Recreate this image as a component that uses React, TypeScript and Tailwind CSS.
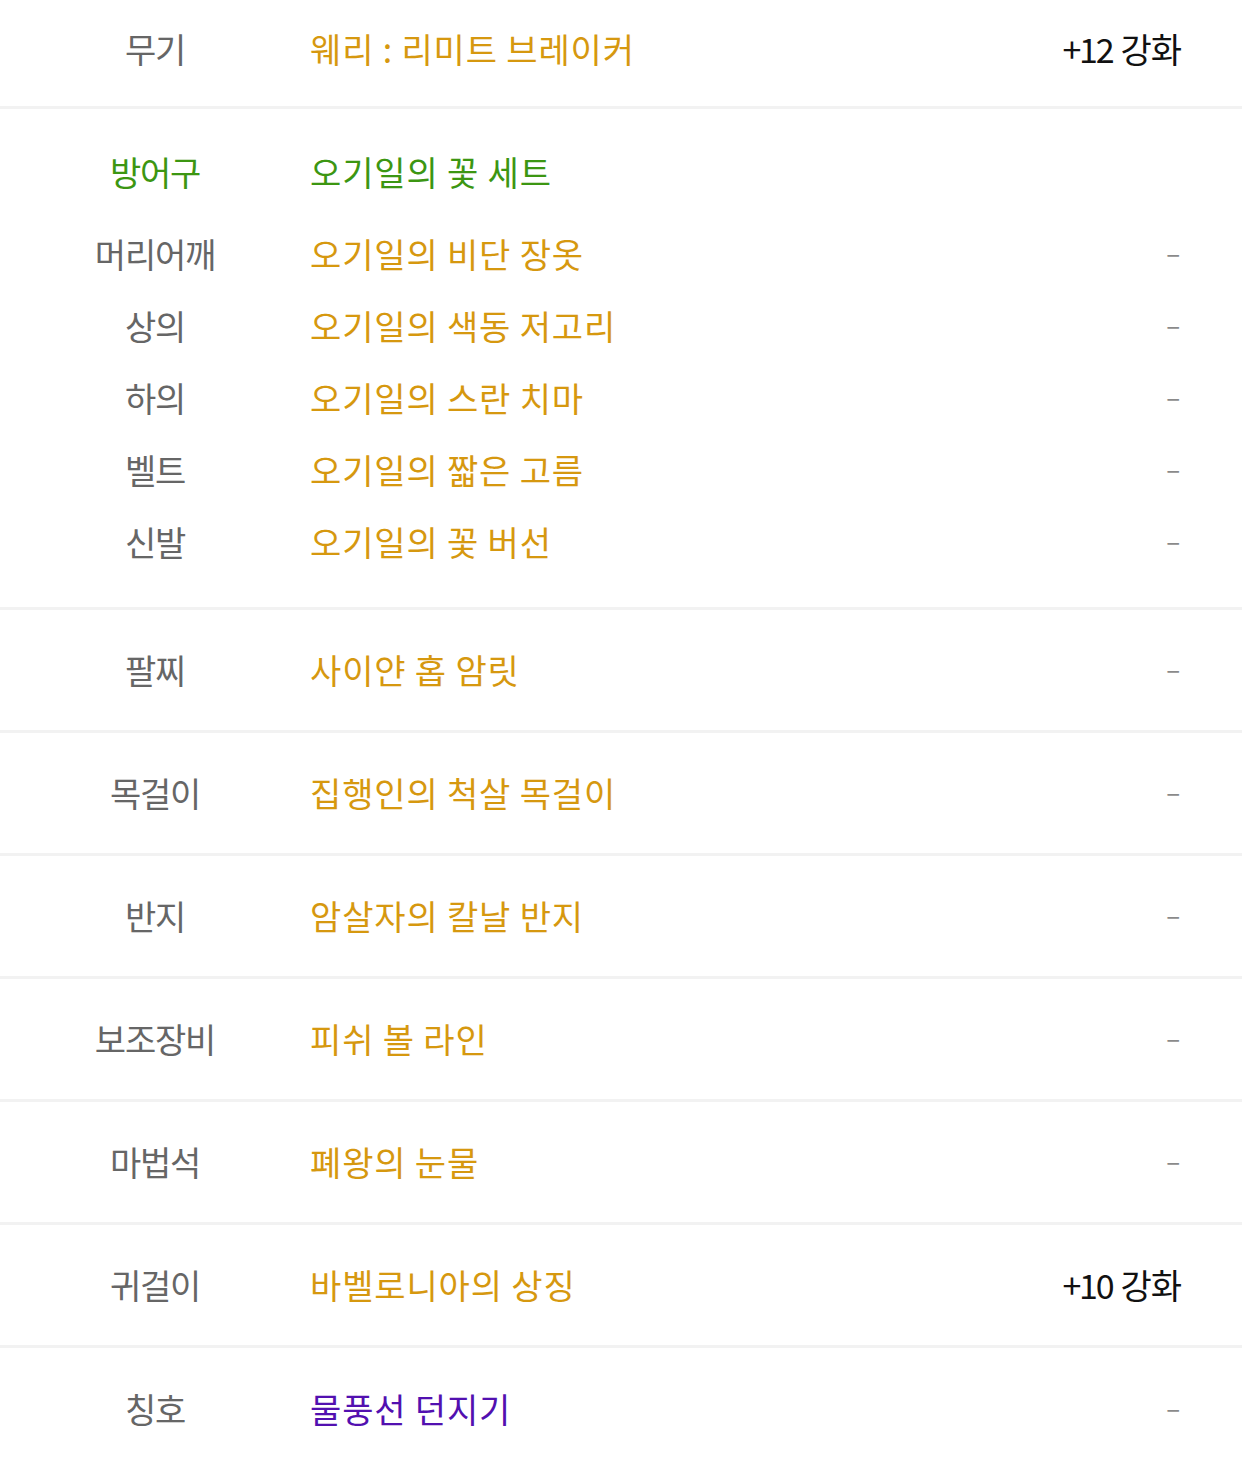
const FONT = "font-['Noto_Sans_CJK_KR','Noto_Sans',sans-serif]";

type Item = { label: string; name: string; value?: string; color?: string };

const armor: Item[] = [
  { label: "머리어깨", name: "오기일의 비단 장옷" },
  { label: "상의", name: "오기일의 색동 저고리" },
  { label: "하의", name: "오기일의 스란 치마" },
  { label: "벨트", name: "오기일의 짧은 고름" },
  { label: "신발", name: "오기일의 꽃 버선" },
];

const singles: Item[] = [
  { label: "팔찌", name: "사이얀 홉 암릿" },
  { label: "목걸이", name: "집행인의 척살 목걸이" },
  { label: "반지", name: "암살자의 칼날 반지" },
  { label: "보조장비", name: "피쉬 볼 라인" },
  { label: "마법석", name: "폐왕의 눈물" },
  { label: "귀걸이", name: "바벨로니아의 상징", value: "+10 강화" },
  { label: "칭호", name: "물풍선 던지기", color: "text-[#5210b0]" },
];

function Value({ value }: { value?: string }) {
  if (value) {
    const [num, word] = value.split(" ");
    return (
      <span className="flex items-center gap-[8px] text-[#111]">
        <span className="tracking-[-2.2px]">{num}</span>
        <span className="tracking-[-1px]">{word}</span>
      </span>
    );
  }
  return <span className="inline-block -translate-y-[5px] text-[26px] text-[#8a8a8a]">–</span>;
}

function Line({ item, className }: { item: Item; className: string }) {
  return (
    <div className={`flex items-center ${className}`}>
      <div className="w-[310px] shrink-0 text-center tracking-[-1.2px] text-[#666666]">{item.label}</div>
      <div className={`flex-1 ${item.color ?? "text-[#d6980f]"}`}>{item.name}</div>
      <div className="pr-[61px]">
        <Value value={item.value} />
      </div>
    </div>
  );
}

export default function App() {
  return (
    <div className={`w-[1242px] bg-white text-[34px] leading-none tracking-[0.85px] ${FONT}`}>
      <Line
        item={{ label: "무기", name: "웨리 : 리미트 브레이커", value: "+12 강화" }}
        className="h-[109px] border-b-[3px] border-[#f2f2f2] pb-[9px]"
      />

      <div className="border-b-[3px] border-[#f2f2f2] pt-[30px] pb-[29px]">
        <div className="flex h-[66px] items-center text-[#3c9612]">
          <div className="w-[310px] shrink-0 text-center tracking-[-1.2px]">방어구</div>
          <div className="flex-1">오기일의 꽃 세트</div>
        </div>
        <div className="mt-[13px] flex flex-col">
          {armor.map((it) => (
            <Line key={it.label} item={it} className="h-[72px]" />
          ))}
        </div>
      </div>

      {singles.map((it, i) => (
        <Line
          key={it.label}
          item={it}
          className={
            i === singles.length - 1
              ? "h-[117px] pt-[4px]"
              : "h-[123px] border-b-[3px] border-[#f2f2f2]"
          }
        />
      ))}
    </div>
  );
}
